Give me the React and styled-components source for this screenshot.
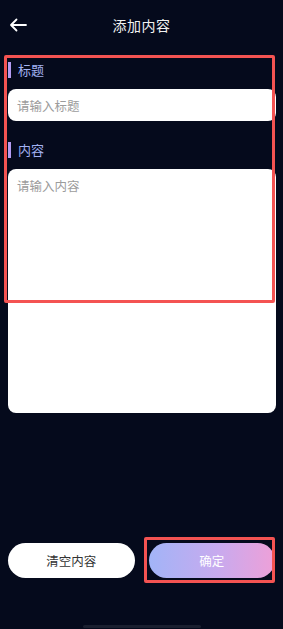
import React from 'react';
import styled, { createGlobalStyle } from 'styled-components';

const GlobalStyle = createGlobalStyle`
  html, body {
    margin: 0;
    padding: 0;
    background: #050a1c;
  }
  body {
    font-family: "Noto Sans CJK SC", "Noto Sans", sans-serif;
  }
`;

const App = () => {
  return (
    <Page>
      <GlobalStyle />
      <Header>
        <BackButton>
          <svg width="18" height="14" viewBox="0 0 18 14" fill="none">
            <path d="M17 7H2M7.5 1.5L2 7l5.5 5.5" stroke="#fff" strokeWidth="1.8" strokeLinecap="round" strokeLinejoin="round" />
          </svg>
        </BackButton>
        <Title>添加内容</Title>
      </Header>

      <Form>
        <Label>标题</Label>
        <TitleInput placeholder="请输入标题" />
        <Label top={21}>内容</Label>
        <ContentArea placeholder="请输入内容" />
      </Form>

      <Spacer />

      <Actions>
        <PillButton>清空内容</PillButton>
        <PillButton primary>确定</PillButton>
      </Actions>

      <HomeBar />

      <Mark style={{ left: 4, top: 55, width: 271, height: 248 }} />
      <Mark style={{ left: 144, top: 537, width: 131, height: 46 }} />
    </Page>
  );
};

const Page = styled.div`
  position: relative;
  min-height: 629px;
  display: flex;
  flex-direction: column;
  background: #050a1c;
  overflow: hidden;
`;

const Header = styled.div`
  position: relative;
  height: 50px;
  display: flex;
  align-items: center;
  justify-content: center;
`;

const BackButton = styled.div`
  position: absolute;
  left: 9px;
  top: 18px;
  display: flex;
`;

const Title = styled.div`
  color: #f2f2f2;
  font-size: 14px;
  letter-spacing: 0.5px;
`;

const Form = styled.div`
  display: flex;
  flex-direction: column;
  padding: 0 7px 0 8px;
`;

const Label = styled.div`
  margin-top: ${p => p.top || 12}px;
  margin-bottom: 11px;
  height: 16px;
  line-height: 16px;
  padding-left: 7px;
  border-left: 3px solid #b59cf2;
  color: #a3b2f2;
  font-size: 13px;
`;

const TitleInput = styled.input`
  box-sizing: border-box;
  height: 32px;
  border: none;
  border-radius: 8px;
  background: #fff;
  padding: 0 9px;
  font-family: inherit;
  font-size: 12.5px;
  outline: none;
  &::placeholder { color: #9c9c9c; }
`;

const ContentArea = styled.textarea`
  box-sizing: border-box;
  height: 244px;
  border: none;
  border-radius: 8px;
  background: #fff;
  padding: 7px 9px;
  font-family: inherit;
  font-size: 12.5px;
  resize: none;
  outline: none;
  &::placeholder { color: #9c9c9c; }
`;

const Spacer = styled.div`
  flex: 1;
`;

const Actions = styled.div`
  display: flex;
  gap: 14px;
  padding: 0 8px 51px 8px;
`;

const PillButton = styled.button`
  flex: 1;
  height: 35px;
  border: none;
  border-radius: 18px;
  font-family: inherit;
  font-size: 12.5px;
  color: ${p => (p.primary ? '#fff' : '#333')};
  background: ${p => (p.primary ? 'linear-gradient(90deg, #a2b4f7 0%, #c8aaee 55%, #eea0d8 100%)' : '#fff')};
`;

const HomeBar = styled.div`
  position: absolute;
  left: 83px;
  bottom: 1px;
  width: 118px;
  height: 3px;
  border-radius: 2px;
  background: #1a1f2f;
`;

const Mark = styled.div`
  position: absolute;
  box-sizing: border-box;
  border: 3px solid #f45352;
  border-radius: 2px;
  pointer-events: none;
`;

export default App;
